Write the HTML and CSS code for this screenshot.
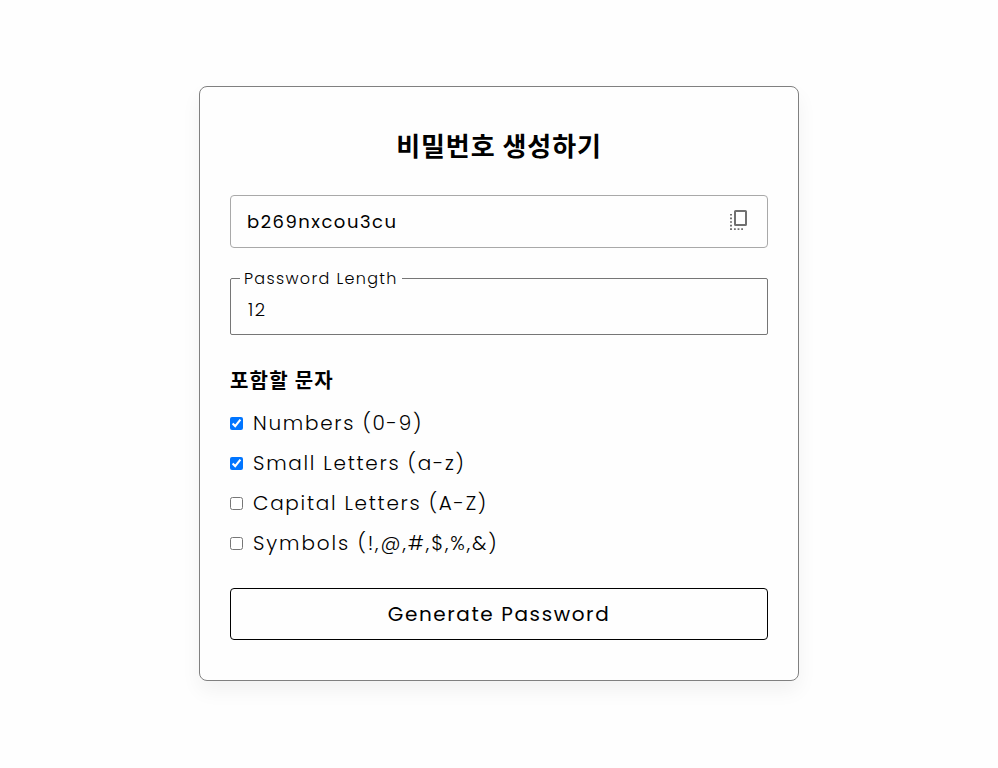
FILE: index.html
```html
<!DOCTYPE html>
<html lang="ko">
<head>
<meta charset="utf-8">
<title>비밀번호 생성하기</title>
<link rel="stylesheet" href="styles.css">
</head>
<body>
<main class="card">
  <h1 class="title">비밀번호 생성하기</h1>
  <div class="result">
    <span class="password">b269nxcou3cu</span>
    <svg class="copy" viewBox="0 0 18 20" width="18" height="20">
      <rect x="5" y="1" width="11" height="14" rx="0.6" fill="none" stroke="#707070" stroke-width="2"/>
      <path d="M0 4h2v1.6H0zM0 7.6h2v1.6H0zM0 11.2h2v1.6H0zM0 14.8h2v1.6H0zM0 18.2h2v1.8H0zM4 18.2h1.8v1.8H4zM7.6 18.2h1.8v1.8H7.6zM11.2 18.2h1.8v1.8h-1.8z" fill="#707070"/>
    </svg>
  </div>
  <fieldset class="length">
    <legend>Password Length</legend>
    <span class="value">12</span>
  </fieldset>
  <h2 class="subtitle">포함할 문자</h2>
  <label class="option"><input type="checkbox" checked><span>Numbers (0-9)</span></label>
  <label class="option"><input type="checkbox" checked><span>Small Letters (a-z)</span></label>
  <label class="option"><input type="checkbox"><span>Capital Letters (A-Z)</span></label>
  <label class="option"><input type="checkbox"><span class="symbols">Symbols (!,@,#,$,%,&amp;)</span></label>
  <button class="generate" type="button">Generate Password</button>
</main>
</body>
</html>
```
FILE: styles.css
```css
* { box-sizing: border-box; margin: 0; padding: 0; }
body {
  min-height: 768px;
  display: flex;
  align-items: flex-start;
  justify-content: center;
  padding-top: 86px;
  background: #fefefe;
  color: #000;
  font-family: Poppins, Inter, "Noto Sans CJK KR", sans-serif;
  letter-spacing: 1px;
}
.card {
  width: 600px;
  height: 595px;
  padding: 41px 30px 0;
  border: 1px solid #808080;
  border-radius: 8px;
  background: #fefefe;
  box-shadow: 0 10px 20px rgba(0, 0, 0, 0.05);
}
.title {
  height: 38px;
  line-height: 38px;
  font-size: 26px;
  font-weight: 600;
  letter-spacing: 0.9px;
  text-align: center;
}
.result {
  display: flex;
  align-items: center;
  justify-content: space-between;
  height: 53px;
  margin-top: 29px;
  padding: 0 19px 0 16px;
  border: 1px solid #a9a9a9;
  border-radius: 4px;
}
.password { font-size: 18px; letter-spacing: 1.5px; }
.copy { display: block; margin-bottom: 3px; }
.length {
  height: 69px;
  margin-top: 18px;
  padding: 8px 15px 0 17px;
  border: 1px solid #767676;
  border-radius: 2px;
}
.length legend {
  height: 24px;
  margin-left: -8px;
  padding: 0 4px;
  line-height: 26px;
  font-size: 16px;
  font-weight: 300;
  letter-spacing: 1.33px;
}
.value { display: block; line-height: 24px; font-size: 18px; font-weight: 300; letter-spacing: 1.5px; }
.subtitle {
  height: 30px;
  margin: 31px 0 7px;
  line-height: 30px;
  font-size: 20px;
  font-weight: 600;
  letter-spacing: 1.2px;
}
.option {
  display: flex;
  align-items: center;
  gap: 10px;
  height: 40px;
  font-size: 20px;
  font-weight: 300;
  letter-spacing: 1.72px;
}
.option input { width: 13px; height: 13px; }
.symbols { letter-spacing: 1.88px; }
.generate {
  display: block;
  width: 100%;
  height: 52px;
  margin-top: 25px;
  border: 1px solid #000;
  border-radius: 4px;
  background: #fefefe;
  color: #000;
  font: 400 20px Poppins, Inter, sans-serif;
  letter-spacing: 1.6px;
}
```
